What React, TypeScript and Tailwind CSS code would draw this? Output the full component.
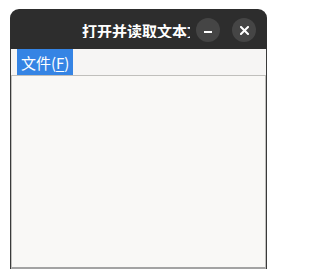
export default function App() {
  return (
    <div className="w-[278px] h-[279px] bg-white pt-[9px] pl-[10px]" style={{ fontFamily: '"Noto Sans CJK SC", "Noto Sans", sans-serif' }}>
      <div className="w-[257px] h-[260px] flex flex-col">
        {/* title bar */}
        <div className="h-[40px] bg-[#2d2d2d] rounded-t-[9px] flex items-center justify-end pt-[2px] pr-[11px]">
          <div className="w-[108px] overflow-hidden whitespace-nowrap text-[15px] font-bold text-white leading-none">
            打开并读取文本文件
          </div>
          <button className="ml-[6px] w-[24px] h-[24px] rounded-full bg-[#454545] flex items-center justify-center">
            <span className="block w-[8px] h-[2px] bg-white mt-[4px]" />
          </button>
          <button className="ml-[12px] w-[24px] h-[24px] rounded-full bg-[#454545] flex items-center justify-center">
            <svg width="9" height="9" viewBox="0 0 9 9">
              <path d="M1 1 L8 8 M8 1 L1 8" stroke="white" strokeWidth="2" strokeLinecap="square" />
            </svg>
          </button>
        </div>
        {/* body */}
        <div className="flex-1 flex flex-col border-x border-[#3a3a3a] bg-[#f6f5f4]">
          <div className="h-[26px] flex pl-[6px]">
            <div className="h-full bg-[#3584e4] text-white text-[15px] leading-none flex items-center px-[4px] pt-[1px]">
              文件(<span className="underline underline-offset-2">F</span>)
            </div>
          </div>
          <div className="flex-1 border border-[#c0bfbc] border-b-2 border-b-[#a3a3a3] bg-[#f9f8f6]" />
        </div>
      </div>
    </div>
  );
}
